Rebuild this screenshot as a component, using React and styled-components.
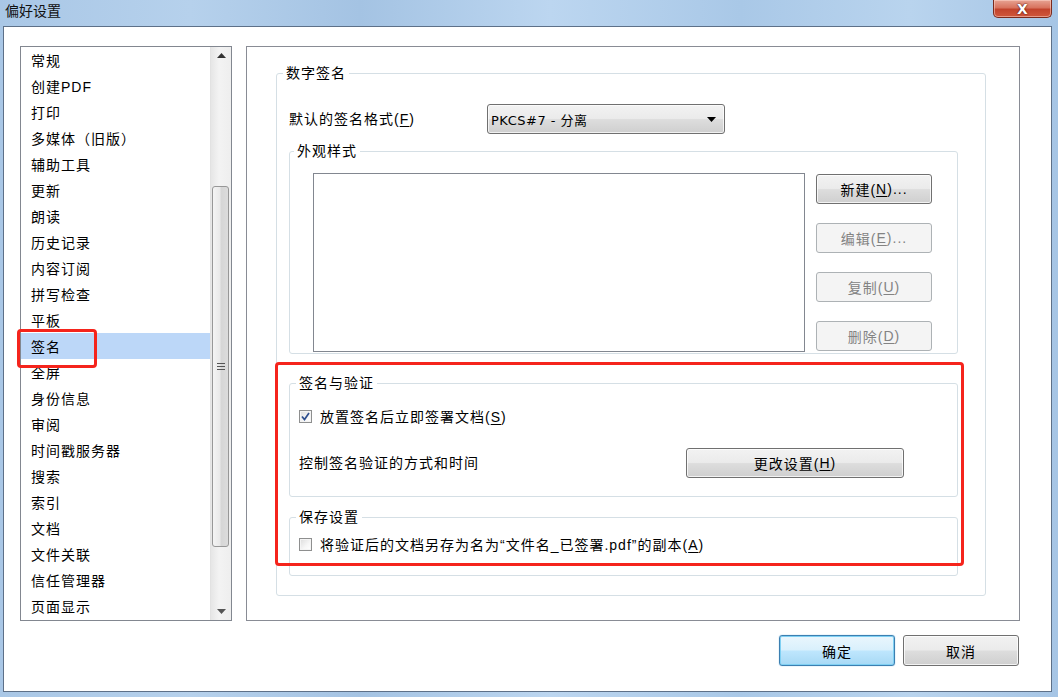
import React from "react";
import styled, { createGlobalStyle, css } from "styled-components";

const Global = createGlobalStyle`
  html, body { margin: 0; padding: 0; background: #ffffff; overflow: hidden; }
  body { font-family: "Liberation Sans", "Noto Sans CJK SC", sans-serif; font-size: 14px; letter-spacing: 1px; color: #000; }
  * { box-sizing: border-box; }
`;

const Window = styled.div`
  width: 1058px;
  height: 697px;
  display: flex;
  flex-direction: column;
  background: linear-gradient(90deg, #a9c7e6 0%, #b6d1ec 18%, #a4c3e3 34%, #bcd6f0 52%, #a9c8e7 70%, #b9d4ee 86%, #a6c5e5 100%);
`;

const TitleBar = styled.div`
  height: 26px;
  display: flex;
  justify-content: space-between;
  align-items: flex-start;
  padding: 0 6px 0 5px;
`;

const Title = styled.div`
  padding-top: 2px;
  font-size: 14px;
  line-height: 18px;
  letter-spacing: 0;
  color: #111;
`;

const CloseBtn = styled.div`
  width: 59px;
  height: 18px;
  border: 1px solid #7a2a1d;
  border-top: none;
  border-radius: 0 0 5px 5px;
  background: linear-gradient(180deg, #e7a393 0%, #d8735e 45%, #c2432c 55%, #d0573c 100%);
  box-shadow: inset 0 0 0 1px rgba(255, 220, 210, 0.5);
  display: flex;
  align-items: center;
  justify-content: center;
  color: #fff;
  font-family: "DejaVu Sans", sans-serif;
  font-weight: bold;
  font-size: 14px;
  line-height: 14px;
  letter-spacing: 0;
  text-shadow: 0 0 2px #5a1a10, 0 0 1px #5a1a10;
`;

const Client = styled.div`
  flex: 1;
  margin: 0 6px 5px 3px;
  border: 1px solid #5d7088;
  background: #ffffff;
  padding: 19px 30px 0 16px;
  display: flex;
  flex-direction: column;
`;

const TopRow = styled.div`
  height: 575px;
  display: flex;
  gap: 14px;
`;

const ListBox = styled.div`
  position: relative;
  width: 212px;
  border: 1px solid #828790;
  display: flex;
`;

const Items = styled.div`
  flex: 1;
  overflow: hidden;
`;

const Item = styled.div`
  height: 26px;
  padding-top: 2px;
  line-height: 24px;
  padding-left: 10px;
  white-space: nowrap;
  color: #000;
  ${(p) =>
    p.$selected &&
    css`
      background: #bcd7f8;
    `}
`;

const ScrollBar = styled.div`
  width: 21px;
  display: flex;
  flex-direction: column;
  background: linear-gradient(90deg, #e6e6e6 0%, #f3f3f3 40%, #eeeeee 100%);
  border-left: 1px solid #e2e2e2;
`;

const ArrowBtn = styled.div`
  height: 17px;
  display: flex;
  align-items: center;
  justify-content: center;
  flex: none;
`;

const Track = styled.div`
  flex: 1;
  display: flex;
  flex-direction: column;
  padding: 0 2px 0 1px;
`;

const Thumb = styled.div`
  margin-top: ${(p) => p.$offset}px;
  height: ${(p) => p.$size}px;
  border: 1px solid #979797;
  border-radius: 3px;
  background: linear-gradient(90deg, #f4f4f4 0%, #e9e9e9 45%, #d6d6d6 55%, #dcdcdc 100%);
  display: flex;
  align-items: center;
  justify-content: center;
`;

const Grip = styled.div`
  width: 8px;
  display: flex;
  flex-direction: column;
  gap: 2px;
  & > span {
    display: block;
    height: 1px;
    background: #555;
  }
`;

const RedBox = styled.div`
  position: absolute;
  left: ${(p) => p.$l}px;
  top: ${(p) => p.$t}px;
  width: ${(p) => p.$w}px;
  height: ${(p) => p.$h}px;
  border: 3px solid #f5241c;
  border-radius: 4px;
  pointer-events: none;
`;

const RightPanel = styled.div`
  position: relative;
  width: 774px;
  border: 1px solid #898c95;
  padding: 17px 0 0 29px;
`;

const Group = styled.fieldset`
  margin: ${(p) => p.$mt || 0}px 0 0 0;
  padding: 0;
  width: ${(p) => p.$w}px;
  border: 1px solid #d5dfe5;
  border-radius: 3px;
  min-width: 0;
`;

const Legend = styled.legend`
  margin-left: ${(p) => p.$ml || 6}px;
  padding: 0 3px;
  line-height: 18px;
  font-size: 14px;
  color: #000;
`;

const GroupBody = styled.div`
  padding: ${(p) => p.$pad};
`;

const FormatRow = styled.div`
  display: flex;
  align-items: center;
  height: 30px;
`;

const Label = styled.div`
  width: ${(p) => p.$w}px;
  flex: none;
  line-height: 18px;
  white-space: nowrap;
`;

const U = styled.span`
  text-decoration: underline;
  text-underline-offset: 2px;
`;

const Combo = styled.div`
  width: 238px;
  height: 30px;
  border: 1px solid #707070;
  border-radius: 3px;
  background: linear-gradient(180deg, #f2f2f2 0%, #ebebeb 48%, #dddddd 52%, #cfcfcf 100%);
  box-shadow: inset 0 0 0 1px rgba(255, 255, 255, 0.7);
  display: flex;
  align-items: center;
  justify-content: space-between;
  padding: 0 8px 0 3px;
  font-family: "DejaVu Sans", "Noto Sans CJK SC", sans-serif;
  font-size: 13px;
  letter-spacing: 0.5px;
`;

const AppearanceRow = styled.div`
  display: flex;
  gap: 11px;
`;

const StyleList = styled.div`
  width: 492px;
  height: 179px;
  border: 1px solid #828790;
  background: #fff;
`;

const ButtonCol = styled.div`
  display: flex;
  flex-direction: column;
  gap: 19px;
  padding-top: 1px;
`;

const Button = styled.div`
  width: ${(p) => p.$w || 116}px;
  height: ${(p) => p.$h || 30}px;
  flex: none;
  border: 1px solid #707070;
  border-radius: 3px;
  background: linear-gradient(180deg, #f2f2f2 0%, #ebebeb 48%, #dddddd 52%, #cfcfcf 100%);
  box-shadow: inset 0 0 0 1px rgba(255, 255, 255, 0.75);
  display: flex;
  align-items: center;
  justify-content: center;
  font-size: 14px;
  color: #000;
  white-space: nowrap;
  ${(p) =>
    p.$disabled &&
    css`
      border-color: #adb2b5;
      background: #f4f4f4;
      box-shadow: none;
      color: #838383;
    `}
  ${(p) =>
    p.$default &&
    css`
      border-color: #3c7fb1;
      background: linear-gradient(180deg, #eaf6fd 0%, #d9f0fc 48%, #bee6fd 52%, #a7d9f5 100%);
      box-shadow: inset 0 0 0 1px #7fd0f3, 0 0 1px #48a0d8;
    `}
`;

const CheckRow = styled.div`
  display: flex;
  align-items: center;
  gap: 8px;
  height: 20px;
`;

const Box = styled.span`
  width: 13px;
  height: 13px;
  flex: none;
  border: 1px solid #8e8f8f;
  background: linear-gradient(135deg, #dcdcdc 0%, #f6f6f6 60%, #ffffff 100%);
  box-shadow: inset 0 0 0 1px #f4f4f4;
  display: flex;
  align-items: center;
  justify-content: center;
`;

const ControlRow = styled.div`
  margin-top: 22px;
  display: flex;
  align-items: center;
`;

const BottomRow = styled.div`
  margin-top: 14px;
  display: flex;
  justify-content: flex-end;
  gap: 8px;
  padding-right: 2px;
`;

const navItems = [
  "常规",
  "创建PDF",
  "打印",
  "多媒体（旧版）",
  "辅助工具",
  "更新",
  "朗读",
  "历史记录",
  "内容订阅",
  "拼写检查",
  "平板",
  "签名",
  "全屏",
  "身份信息",
  "审阅",
  "时间戳服务器",
  "搜索",
  "索引",
  "文档",
  "文件关联",
  "信任管理器",
  "页面显示",
];

function Checkbox({ checked }) {
  return (
    <Box>
      {checked && (
        <svg width="9" height="9" viewBox="0 0 9 9">
          <path d="M1 4.5 L3.5 7.5 L8 1" fill="none" stroke="#2d4e8e" strokeWidth="1.7" />
        </svg>
      )}
    </Box>
  );
}

function Arrow({ up, color = "#000" }) {
  return (
    <svg width="9" height="5" viewBox="0 0 9 5">
      {up ? <path d="M0 5 L4.5 0 L9 5 Z" fill={color} /> : <path d="M0 0 L9 0 L4.5 5 Z" fill={color} />}
    </svg>
  );
}

export default function App() {
  return (
    <>
      <Global />
      <Window>
        <TitleBar>
          <Title>偏好设置</Title>
          <CloseBtn>X</CloseBtn>
        </TitleBar>
        <Client>
          <TopRow>
            <ListBox>
              <Items>
                {navItems.map((t) => (
                  <Item key={t} $selected={t === "签名"}>
                    {t}
                  </Item>
                ))}
              </Items>
              <ScrollBar>
                <ArrowBtn>
                  <Arrow up color="#333" />
                </ArrowBtn>
                <Track>
                  <Thumb $offset={122} $size={361}>
                    <Grip>
                      <span />
                      <span />
                      <span />
                    </Grip>
                  </Thumb>
                </Track>
                <ArrowBtn>
                  <Arrow color="#555" />
                </ArrowBtn>
              </ScrollBar>
              <RedBox $l={-4} $t={282} $w={80} $h={39} />
            </ListBox>

            <RightPanel>
              <Group $w={710}>
                <Legend>数字签名</Legend>
                <GroupBody $pad="22px 27px 19px 12px">
                  <FormatRow>
                    <Label $w={198}>
                      默认的签名格式(<U>F</U>)
                    </Label>
                    <Combo>
                      <span>PKCS#7 - 分离</span>
                      <Arrow />
                    </Combo>
                  </FormatRow>

                  <Group $w={669} $mt={8}>
                    <Legend $ml={4}>外观样式</Legend>
                    <GroupBody $pad="13px 25px 1px 23px">
                      <AppearanceRow>
                        <StyleList />
                        <ButtonCol>
                          <Button>
                            新建(<U>N</U>)...
                          </Button>
                          <Button $disabled>
                            编辑(<U>E</U>)...
                          </Button>
                          <Button $disabled>
                            复制(<U>U</U>)
                          </Button>
                          <Button $disabled>
                            删除(<U>D</U>)
                          </Button>
                        </ButtonCol>
                      </AppearanceRow>
                    </GroupBody>
                  </Group>

                  <Group $w={669} $mt={20}>
                    <Legend>签名与验证</Legend>
                    <GroupBody $pad="14px 20px 18px 9px">
                      <CheckRow>
                        <Checkbox checked />
                        <span>
                          放置签名后立即签署文档(<U>S</U>)
                        </span>
                      </CheckRow>
                      <ControlRow>
                        <Label $w={387}>控制签名验证的方式和时间</Label>
                        <Button $w={218}>
                          更改设置(<U>H</U>)
                        </Button>
                      </ControlRow>
                    </GroupBody>
                  </Group>

                  <Group $w={669} $mt={11}>
                    <Legend>保存设置</Legend>
                    <GroupBody $pad="8px 20px 21px 9px">
                      <CheckRow>
                        <Checkbox />
                        <span>
                          将验证后的文档另存为名为“文件名_已签署.pdf”的副本(<U>A</U>)
                        </span>
                      </CheckRow>
                    </GroupBody>
                  </Group>
                </GroupBody>
              </Group>
              <RedBox $l={28} $t={315} $w={689} $h={204} />
            </RightPanel>
          </TopRow>

          <BottomRow>
            <Button $default $h={31}>
              确定
            </Button>
            <Button $h={31}>取消</Button>
          </BottomRow>
        </Client>
      </Window>
    </>
  );
}
